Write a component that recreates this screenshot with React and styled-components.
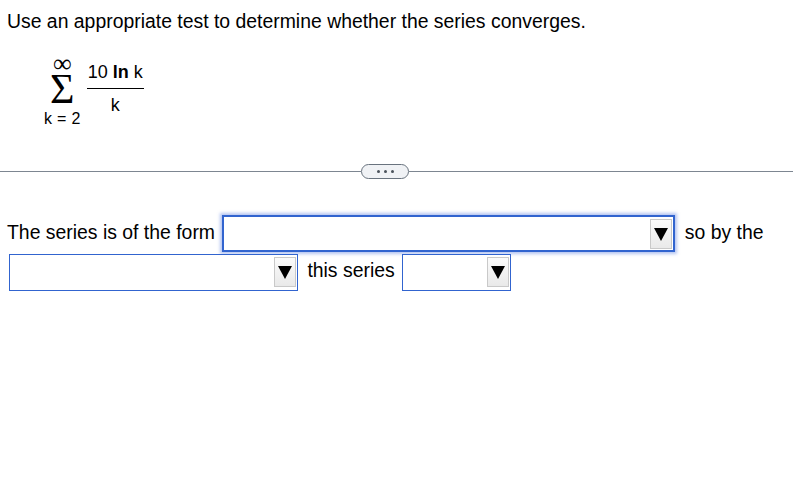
import React from "react";
import styled, { createGlobalStyle } from "styled-components";

const GlobalStyle = createGlobalStyle`
  html, body {
    margin: 0;
    padding: 0;
    background: #fff;
  }
  body {
    font-family: "Liberation Sans", Arial, sans-serif;
    color: #000;
  }
`;

const Page = styled.div`
  width: 793px;
  height: 484px;
  overflow: hidden;
`;

const Question = styled.p`
  margin: 0;
  padding: 10px 0 0 7px;
  font-size: 19.4px;
  line-height: 23px;
`;

const MathRow = styled.div`
  display: flex;
  align-items: center;
  margin: 23px 0 0 44px;
`;

const Sigma = styled.div`
  display: flex;
  flex-direction: column;
  align-items: center;
  white-space: nowrap;
`;

const Infinity = styled.span`
  font-family: "Liberation Serif", "Times New Roman", serif;
  font-size: 26px;
  line-height: 16px;
`;

const SigmaGlyph = styled.span`
  font-family: "Liberation Serif", "Times New Roman", serif;
  font-size: 42px;
  line-height: 34px;
`;

const Limit = styled.span`
  font-size: 16px;
  line-height: 18px;
  margin-top: 4px;
  letter-spacing: 0.3px;
`;

const Fraction = styled.div`
  display: flex;
  flex-direction: column;
  align-items: center;
  margin-left: 6px;
  margin-top: -7px;
  font-size: 18px;
  white-space: nowrap;
`;

const Numerator = styled.span`
  padding: 0 1px 6px;
  line-height: 20px;
  border-bottom: 1.5px solid #000;
  b {
    font-weight: bold;
  }
`;

const Denominator = styled.span`
  line-height: 20px;
  padding-top: 6px;
`;

const Divider = styled.div`
  display: grid;
  grid-template-columns: 361px auto 1fr;
  align-items: center;
  margin-top: 36px;
`;

const Rule = styled.div`
  height: 1px;
  background: #7d8691;
`;

const MoreButton = styled.button`
  display: flex;
  align-items: center;
  justify-content: center;
  gap: 4px;
  width: 48px;
  height: 15px;
  padding: 0;
  border: 1.5px solid #69737e;
  border-radius: 8px;
  background: #f0f2f5;
`;

const Dot = styled.span`
  width: 3px;
  height: 3px;
  border-radius: 50%;
  background: #4b535c;
`;

const Answer = styled.div`
  margin-top: 35px;
  padding-left: 7px;
  font-size: 19.4px;
  line-height: 37px;
  width: 770px;
`;

const Select = styled.span`
  display: inline-flex;
  justify-content: flex-end;
  align-items: center;
  box-sizing: border-box;
  width: ${(p) => p.$width}px;
  height: 37px;
  padding: 2px 1px 2px 0;
  vertical-align: middle;
  margin: ${(p) => p.$margin || "0"};
  border: ${(p) => (p.$focused ? "2px" : "1px")} solid #3164cf;
  box-shadow: ${(p) =>
    p.$focused ? "0 0 3px 2px rgba(120, 150, 230, 0.55)" : "none"};
  background: #fff;
`;

const Arrow = styled.span`
  display: flex;
  align-items: center;
  justify-content: center;
  width: 22px;
  height: 30px;
  box-sizing: border-box;
  border: 1px solid #c9c9c9;
  background: linear-gradient(#fbfbfb, #e9e9e9);
`;

const DropDown = ({ width, focused, margin }) => (
  <Select $width={width} $focused={focused} $margin={margin}>
    <Arrow>
      <svg width="14" height="14" viewBox="0 0 14 14">
        <polygon points="0,1 14,1 7,14" fill="#000" />
      </svg>
    </Arrow>
  </Select>
);

export default function App() {
  return (
    <Page>
      <GlobalStyle />
      <Question>Use an appropriate test to determine whether the series converges.</Question>
      <MathRow>
        <Sigma>
          <Infinity>∞</Infinity>
          <SigmaGlyph>Σ</SigmaGlyph>
          <Limit>k = 2</Limit>
        </Sigma>
        <Fraction>
          <Numerator>
            10 <b>ln</b> k
          </Numerator>
          <Denominator>k</Denominator>
        </Fraction>
      </MathRow>
      <Divider>
        <Rule />
        <MoreButton aria-label="more">
          <Dot />
          <Dot />
          <Dot />
        </MoreButton>
        <Rule />
      </Divider>
      <Answer>
        The series is of the form <DropDown width={453} focused margin="0 4px 0 2px" /> so by the{" "}
        <DropDown width={289} margin="0 4px 0 2px" /> this series{" "}
        <DropDown width={109} margin="0 0 0 2px" />
      </Answer>
    </Page>
  );
}
